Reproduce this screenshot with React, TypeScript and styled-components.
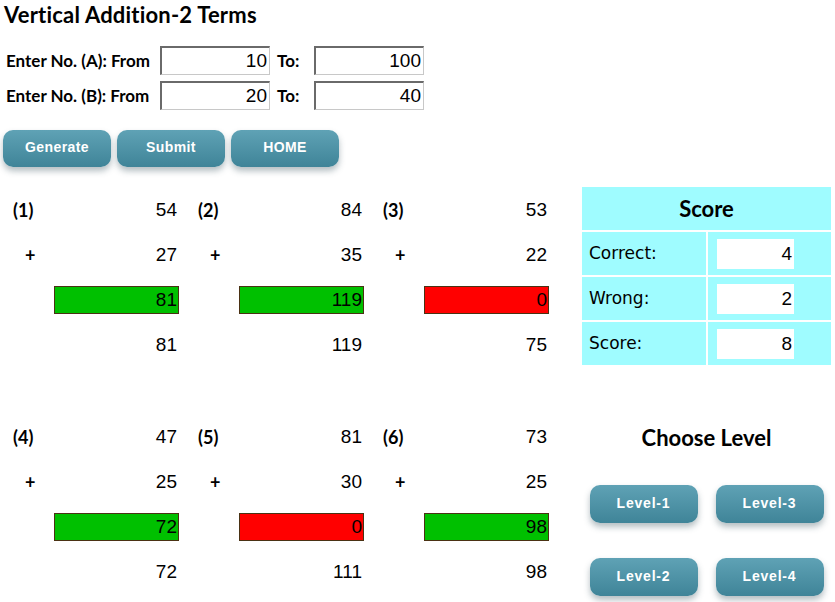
import React from "react";
import styled, { createGlobalStyle } from "styled-components";

const GlobalStyle = createGlobalStyle`
  html, body {
    margin: 0;
    padding: 0;
    background: #ffffff;
  }
  body {
    font-family: "Lato", "Open Sans", sans-serif;
    color: #000000;
  }
`;

const Page = styled.div`
  width: 835px;
  height: 602px;
  overflow: hidden;
  display: flex;
  flex-direction: column;
`;

const Title = styled.h1`
  margin: 0;
  padding: 2px 0 0 4px;
  font-family: "Lato", sans-serif;
  font-weight: 700;
  font-size: 22px;
  letter-spacing: 0.2px;
  line-height: 26px;
`;

const RangeForm = styled.div`
  display: grid;
  grid-template-columns: 154px 110px 44px 110px;
  grid-auto-rows: 29px;
  row-gap: 6px;
  margin: 18px 0 0 6px;
  align-items: center;
`;

const FieldLabel = styled.span<{ indent?: number }>`
  font-family: "Lato", sans-serif;
  font-weight: 700;
  font-size: 17px;
  white-space: nowrap;
  padding-left: ${(p) => p.indent ?? 0}px;
`;

const NumberBox = styled.div`
  height: 100%;
  box-sizing: border-box;
  border-top: 2px solid #6a6a6a;
  border-left: 2px solid #6a6a6a;
  border-right: 1px solid #c8c8c8;
  border-bottom: 1px solid #c8c8c8;
  background: #ffffff;
  font-family: "Liberation Sans", Arial, sans-serif;
  font-size: 19px;
  display: flex;
  align-items: center;
  justify-content: flex-end;
  padding-right: 2px;
`;

const ButtonRow = styled.div`
  display: flex;
  gap: 6px;
  margin: 20px 0 0 3px;
`;

const TealButton = styled.button`
  width: 108px;
  height: 37px;
  border: none;
  border-radius: 10px;
  background: linear-gradient(#5fa2b5, #3f8498);
  box-shadow: 0 4px 6px rgba(40, 70, 80, 0.35);
  color: #ffffff;
  font-family: "Liberation Sans", Arial, sans-serif;
  font-weight: 700;
  font-size: 14px;
  letter-spacing: 0.4px;
  padding: 0 0 3px 0;
  cursor: pointer;
`;

const Content = styled.div`
  display: flex;
  margin-top: 20px;
  padding-left: 13px;
`;

const Problems = styled.div`
  display: flex;
  flex-direction: column;
  width: 536px;
`;

const ProblemRow = styled.div<{ gapTop?: number }>`
  display: grid;
  grid-template-columns: repeat(3, 166px);
  column-gap: 19px;
  margin-top: ${(p) => p.gapTop ?? 0}px;
`;

const Problem = styled.div`
  display: grid;
  grid-template-columns: 41px 125px;
  grid-auto-rows: 45px;
  align-items: center;
`;

const Tag = styled.span<{ indent?: number }>`
  font-family: "Lato", sans-serif;
  font-weight: 700;
  font-size: 18px;
  padding-left: ${(p) => p.indent ?? 0}px;
`;

const Value = styled.span`
  font-family: "Liberation Sans", Arial, sans-serif;
  font-size: 19px;
  text-align: right;
  padding-right: 2px;
`;

const AnswerBox = styled.div<{ correct: boolean }>`
  height: 28px;
  box-sizing: border-box;
  border: 1px solid #4a3214;
  background: ${(p) => (p.correct ? "#00c000" : "#ff0000")};
  font-family: "Liberation Sans", Arial, sans-serif;
  font-size: 19px;
  display: flex;
  align-items: center;
  justify-content: flex-end;
  padding-right: 1px;
`;

const Side = styled.div`
  margin-left: 33px;
  width: 249px;
  display: flex;
  flex-direction: column;
  align-items: center;
`;

const ScoreTable = styled.div`
  width: 249px;
  display: grid;
  grid-template-columns: 124px 123px;
  grid-template-rows: 43px repeat(3, 43px);
  gap: 2px;
  background: #ffffff;
`;

const ScoreHead = styled.div`
  grid-column: 1 / 3;
  background: #9ffcff;
  display: flex;
  align-items: center;
  justify-content: center;
  font-family: "Lato", sans-serif;
  font-weight: 700;
  font-size: 22px;
`;

const ScoreLabel = styled.div`
  background: #9ffcff;
  display: flex;
  align-items: center;
  padding: 0 0 2px 7px;
  font-family: "DejaVu Sans", Verdana, sans-serif;
  font-size: 17px;
`;

const ScoreCell = styled.div`
  background: #9ffcff;
  display: flex;
  align-items: center;
  padding-left: 9px;
`;

const ScoreValue = styled.div`
  width: 77px;
  height: 30px;
  background: #ffffff;
  display: flex;
  align-items: center;
  justify-content: flex-end;
  padding-right: 2px;
  box-sizing: border-box;
  font-family: "Liberation Sans", Arial, sans-serif;
  font-size: 19px;
`;

const LevelTitle = styled.h2`
  margin: 60px 0 0 0;
  font-family: "Lato", sans-serif;
  font-weight: 700;
  font-size: 22px;
  line-height: 26px;
`;

const LevelGrid = styled.div`
  display: grid;
  grid-template-columns: repeat(2, 108px);
  column-gap: 18px;
  row-gap: 35px;
  margin-top: 34px;
`;

const LevelButton = styled(TealButton)`
  height: 38px;
  letter-spacing: 0.8px;
`;

type Item = { a: number; b: number; entered: number };

const top: Item[] = [
  { a: 54, b: 27, entered: 81 },
  { a: 84, b: 35, entered: 119 },
  { a: 53, b: 22, entered: 0 },
];

const bottom: Item[] = [
  { a: 47, b: 25, entered: 72 },
  { a: 81, b: 30, entered: 0 },
  { a: 73, b: 25, entered: 98 },
];

const ProblemCard = ({ item, n }: { item: Item; n: number }) => {
  const sum = item.a + item.b;
  return (
    <Problem>
      <Tag>({n})</Tag>
      <Value>{item.a}</Value>
      <Tag indent={12}>+</Tag>
      <Value>{item.b}</Value>
      <span />
      <AnswerBox correct={item.entered === sum}>{item.entered}</AnswerBox>
      <span />
      <Value>{sum}</Value>
    </Problem>
  );
};

const App = () => {
  return (
    <Page>
      <GlobalStyle />
      <Title>Vertical Addition-2 Terms</Title>
      <RangeForm>
        <FieldLabel>Enter No. (A): From</FieldLabel>
        <NumberBox>10</NumberBox>
        <FieldLabel indent={7}>To:</FieldLabel>
        <NumberBox>100</NumberBox>
        <FieldLabel>Enter No. (B): From</FieldLabel>
        <NumberBox>20</NumberBox>
        <FieldLabel indent={7}>To:</FieldLabel>
        <NumberBox>40</NumberBox>
      </RangeForm>
      <ButtonRow>
        <TealButton>Generate</TealButton>
        <TealButton>Submit</TealButton>
        <TealButton>HOME</TealButton>
      </ButtonRow>
      <Content>
        <Problems>
          <ProblemRow>
            {top.map((item, i) => (
              <ProblemCard key={i} item={item} n={i + 1} />
            ))}
          </ProblemRow>
          <ProblemRow gapTop={47}>
            {bottom.map((item, i) => (
              <ProblemCard key={i} item={item} n={i + 4} />
            ))}
          </ProblemRow>
        </Problems>
        <Side>
          <ScoreTable>
            <ScoreHead>Score</ScoreHead>
            <ScoreLabel>Correct:</ScoreLabel>
            <ScoreCell>
              <ScoreValue>4</ScoreValue>
            </ScoreCell>
            <ScoreLabel>Wrong:</ScoreLabel>
            <ScoreCell>
              <ScoreValue>2</ScoreValue>
            </ScoreCell>
            <ScoreLabel>Score:</ScoreLabel>
            <ScoreCell>
              <ScoreValue>8</ScoreValue>
            </ScoreCell>
          </ScoreTable>
          <LevelTitle>Choose Level</LevelTitle>
          <LevelGrid>
            <LevelButton>Level-1</LevelButton>
            <LevelButton>Level-3</LevelButton>
            <LevelButton>Level-2</LevelButton>
            <LevelButton>Level-4</LevelButton>
          </LevelGrid>
        </Side>
      </Content>
    </Page>
  );
};

export default App;
